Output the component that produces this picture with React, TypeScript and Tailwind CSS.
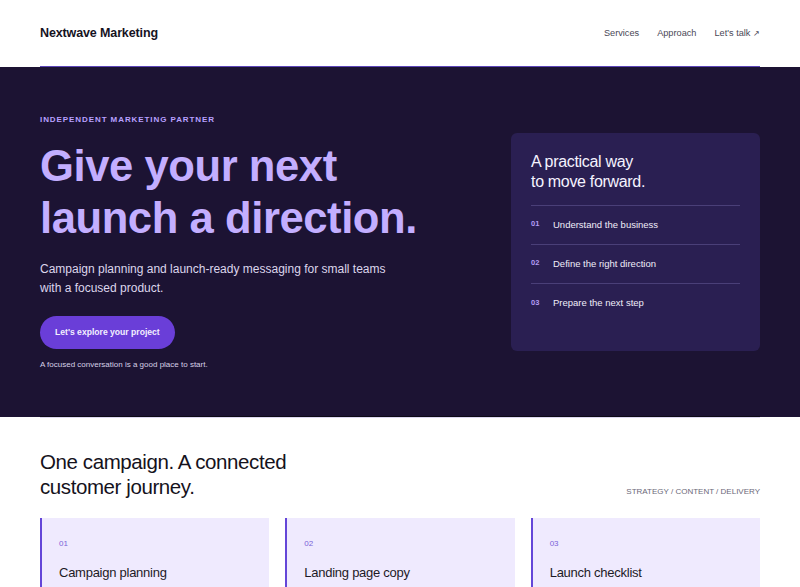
import React from "react";

const font = { fontFamily: '"Liberation Sans", Arial, sans-serif' };

export default function App() {
  return (
    <div className="min-h-[587px] bg-white" style={font}>
      <header className="bg-white">
        <div className="mx-[40px] flex h-[67px] items-center justify-between border-b border-[#5b45b8]">
          <div className="mt-[1px] text-[12.5px] font-semibold tracking-[-0.01em] text-[#16131f]">Nextwave Marketing</div>
          <nav className="mt-[1px] flex items-center gap-[18px] text-[9.2px] text-[#4a4856]">
            <span>Services</span>
            <span>Approach</span>
            <span>
              Let's talk <span className="text-[8px]">↗</span>
            </span>
          </nav>
        </div>
      </header>

      <section className="bg-[#1c1333]">
        <div className="mx-[40px] flex h-[350px] justify-between border-b border-[#0d0a17] pt-[47px]">
          <div className="flex flex-col">
            <div className="text-[8px] font-bold tracking-[0.115em] text-[#b8a0ff]">INDEPENDENT MARKETING PARTNER</div>
            <h1 className="mt-[14px] text-[43.6px] font-bold leading-[52px] tracking-[-0.01em] text-[#c3aeff]">
              Give your next
              <br />
              launch a direction.
            </h1>
            <p className="mt-[16px] text-[12px] leading-[19px] text-[#dcd6ec]">
              Campaign planning and launch-ready messaging for small teams
              <br />
              with a focused product.
            </p>
            <div className="mt-[18px]">
              <button className="h-[33px] rounded-full bg-[#6a3ed8] px-[15px] text-[8.6px] font-semibold text-[#f3efff]">
                Let's explore your project
              </button>
            </div>
            <div className="mt-[10px] text-[8px] text-[#d6d0e6]">A focused conversation is a good place to start.</div>
          </div>

          <div className="mt-[19px] h-[218px] w-[249px] rounded-[6px] bg-[#2a1f52] px-[20px] pt-[19px]">
            <div className="text-[16px] leading-[20px] tracking-[-0.02em] text-[#f5f3ff]">
              A practical way
              <br />
              to move forward.
            </div>
            <div className="mt-[13px] border-t border-[#4a3f78]">
              {[
                ["01", "Understand the business"],
                ["02", "Define the right direction"],
                ["03", "Prepare the next step"],
              ].map(([n, t], i) => (
                <div
                  key={n}
                  className={`flex h-[39px] items-center gap-[13px] ${i < 2 ? "border-b border-[#4a3f78]" : ""}`}
                >
                  <span className="mb-[2px] w-[9px] text-[7.5px] font-bold text-[#b29cf5]">{n}</span>
                  <span className="text-[9.5px] text-[#f0edf9]">{t}</span>
                </div>
              ))}
            </div>
          </div>
        </div>
      </section>

      <section className="bg-white">
        <div className="mx-[40px] border-t border-[#ddd8f0] pt-[31px]">
          <div className="flex items-end justify-between">
            <h2 className="text-[20.5px] leading-[25px] tracking-[-0.02em] text-[#15121c]">
              One campaign. A connected
              <br />
              customer journey.
            </h2>
            <div className="mb-[1px] text-[8px] text-[#6b6878]">STRATEGY / CONTENT / DELIVERY</div>
          </div>
          <div className="mt-[19px] grid grid-cols-3 gap-[16px]">
            {[
              ["01", "Campaign planning"],
              ["02", "Landing page copy"],
              ["03", "Launch checklist"],
            ].map(([n, t]) => (
              <div key={n} className="h-[80px] border-l-2 border-[#6446d8] bg-[#efeafe] px-[17px] pt-[20px]">
                <div className="text-[8px] text-[#7a62d8]">{n}</div>
                <div className="mt-[13px] text-[13px] tracking-[-0.02em] text-[#1d1a26]">{t}</div>
              </div>
            ))}
          </div>
        </div>
      </section>
    </div>
  );
}
